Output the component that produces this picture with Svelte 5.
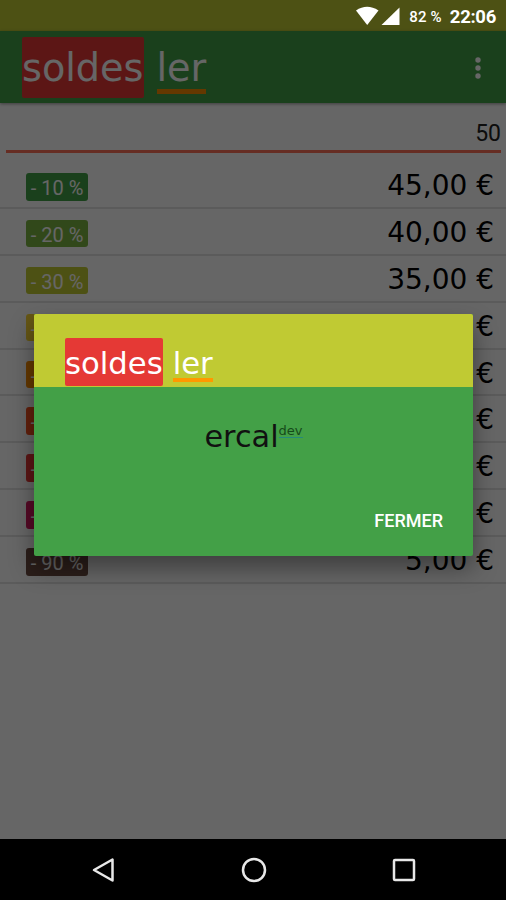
<script>
    const price = 50;

    const discounts = [
        { rate: 10, color: "#43a047" },
        { rate: 20, color: "#7cb342" },
        { rate: 30, color: "#c0ca33" },
        { rate: 40, color: "#fdd835" },
        { rate: 50, color: "#fb8c00" },
        { rate: 60, color: "#f4511e" },
        { rate: 70, color: "#e53935" },
        { rate: 80, color: "#d81b60" },
        { rate: 90, color: "#6d4c41" },
    ];

    function formatPrice(rate) {
        return (price * (1 - rate / 100)).toFixed(2).replace(".", ",") + " €";
    }
</script>

<div class="screen">
    <div class="statusbar"></div>
    <header class="appbar">
        <h1 class="logo"><span class="red">soldes</span> <span class="line">ler</span></h1>
        <svg class="more" viewBox="0 0 8 24" width="8" height="24">
            <circle cx="4" cy="4" r="2.7" />
            <circle cx="4" cy="12" r="2.7" />
            <circle cx="4" cy="20" r="2.7" />
        </svg>
    </header>
    <div class="amount">{price}</div>
    <ul class="list">
        {#each discounts as { rate, color }}
            <li>
                <span class="badge" style="background: {color}">- {rate} %</span>
                <span class="price">{formatPrice(rate)}</span>
            </li>
        {/each}
    </ul>

    <div class="overlay">
        <div class="system">
            <svg viewBox="0 0 46 20" width="46" height="20">
                <path d="M1 4.500Q12 -3 23.500 4.500L12.200 19z" />
                <path d="M44.500 1.500V19H26.500z" />
            </svg>
            <span class="battery">82 %</span>
            <span class="clock">22:06</span>
        </div>
        <div class="dialog">
            <div class="dialog-title">
                <h2 class="logo small"><span class="red">soldes</span> <span class="line">ler</span></h2>
            </div>
            <div class="dialog-body">
                <p class="author">ercal<span class="dev">dev</span></p>
                <button>FERMER</button>
            </div>
        </div>
    </div>

    <nav>
        <svg viewBox="0 0 26 26" width="26" height="26">
            <path d="M21.500 2.500V23.500L3 13z" />
        </svg>
        <svg viewBox="0 0 26 26" width="26" height="26">
            <circle cx="13" cy="13" r="11" />
        </svg>
        <svg viewBox="0 0 26 26" width="26" height="26">
            <rect x="3" y="3" width="20" height="20" rx="1" />
        </svg>
    </nav>
</div>

<style>
    :global(body) {
        margin: 0;
        overflow: hidden;
    }
    .screen {
        position: relative;
        display: flex;
        flex-direction: column;
        width: 506px;
        height: 900px;
        box-sizing: border-box;
        overflow: hidden;
        background: #fff;
        font-family: Roboto, sans-serif;
    }
    .statusbar {
        flex: none;
        height: 31px;
        background: #c0ca33;
    }
    .appbar {
        display: flex;
        flex: none;
        justify-content: space-between;
        height: 72px;
        padding: 6px 24px 0 22px;
        box-sizing: border-box;
        background: #43a047;
        box-shadow: 0 1px 3px rgba(0, 0, 0, 0.4);
    }
    .logo {
        display: flex;
        align-items: flex-start;
        gap: 13px;
        margin: 0;
        color: #fff;
        font: 400 38.200px/63px "DejaVu Sans", sans-serif;
    }
    .logo span {
        display: block;
    }
    .logo .red {
        height: 61px;
        border-radius: 2px;
        background: #e53935;
    }
    .logo .line {
        height: 52px;
        border-bottom: 5px solid #fb8c00;
    }
    .more {
        margin-top: 19px;
        fill: #fff;
    }
    .amount {
        flex: none;
        height: 50px;
        margin: 0 5px 0 6px;
        padding-top: 2px;
        box-sizing: border-box;
        border-bottom: 3px solid #ff7058;
        color: #222;
        font-size: 23px;
        line-height: 58px;
        text-align: right;
    }
    .list {
        flex: 1;
        margin: 0;
        padding: 9px 0 0;
        list-style: none;
    }
    .list li {
        display: flex;
        justify-content: space-between;
        height: 46.900px;
        padding: 11px 12px 0 26px;
        box-sizing: border-box;
        border-bottom: 2px solid #e4e4e4;
    }
    .badge {
        width: 62px;
        height: 27.500px;
        border-radius: 3px;
        color: #fff;
        font-size: 20px;
        line-height: 31px;
        text-align: center;
    }
    .price {
        color: #000;
        font: 28px/26px "DejaVu Sans", sans-serif;
    }
    .overlay {
        position: absolute;
        inset: 0 0 61px;
        background: rgba(0, 0, 0, 0.6);
    }
    .system {
        display: flex;
        align-items: center;
        justify-content: flex-end;
        height: 32px;
        padding-right: 10px;
        color: #fff;
    }
    .system svg {
        fill: #fff;
    }
    .battery {
        margin: 2px 0 0 8px;
        font-size: 15px;
        font-weight: 500;
        letter-spacing: 0.2px;
    }
    .clock {
        margin: 2px 0 0 8px;
        font-size: 18.500px;
        font-weight: 700;
        letter-spacing: -0.3px;
    }
    .dialog {
        width: 439px;
        height: 241.500px;
        margin: 282px 0 0 34px;
        overflow: hidden;
        border-radius: 2px;
        background: #43a047;
        box-shadow: 0 12px 24px rgba(0, 0, 0, 0.4);
    }
    .dialog-title {
        height: 73px;
        padding: 24px 0 0 31px;
        box-sizing: border-box;
        background: #c0ca33;
    }
    .small {
        gap: 10px;
        font-size: 30.700px;
        line-height: 51px;
    }
    .small .red {
        height: 48px;
    }
    .small .line {
        height: 40px;
        border-bottom-width: 4px;
        border-bottom-color: #ff9800;
    }
    .dialog-body {
        display: flex;
        flex-direction: column;
        align-items: center;
        height: 168.500px;
        padding-top: 28px;
        box-sizing: border-box;
    }
    .author {
        display: flex;
        margin: 0;
        color: #111;
        font: 30.300px/43px "DejaVu Sans", sans-serif;
    }
    .dev {
        height: 22px;
        color: #154a19;
        font-size: 13px;
        line-height: 31px;
        box-shadow: 0 1px #26897a;
    }
    button {
        align-self: flex-end;
        margin: 47px 30px 0 0;
        padding: 0;
        border: 0;
        background: none;
        color: #fff;
        font: 500 18px/32px Roboto, sans-serif;
    }
    nav {
        display: flex;
        align-items: center;
        justify-content: center;
        gap: 124px;
        height: 61px;
        padding-left: 2px;
        background: #000;
    }
    nav svg {
        fill: none;
        stroke: #e8e8e8;
        stroke-width: 2.500;
        stroke-linejoin: round;
    }
</style>
